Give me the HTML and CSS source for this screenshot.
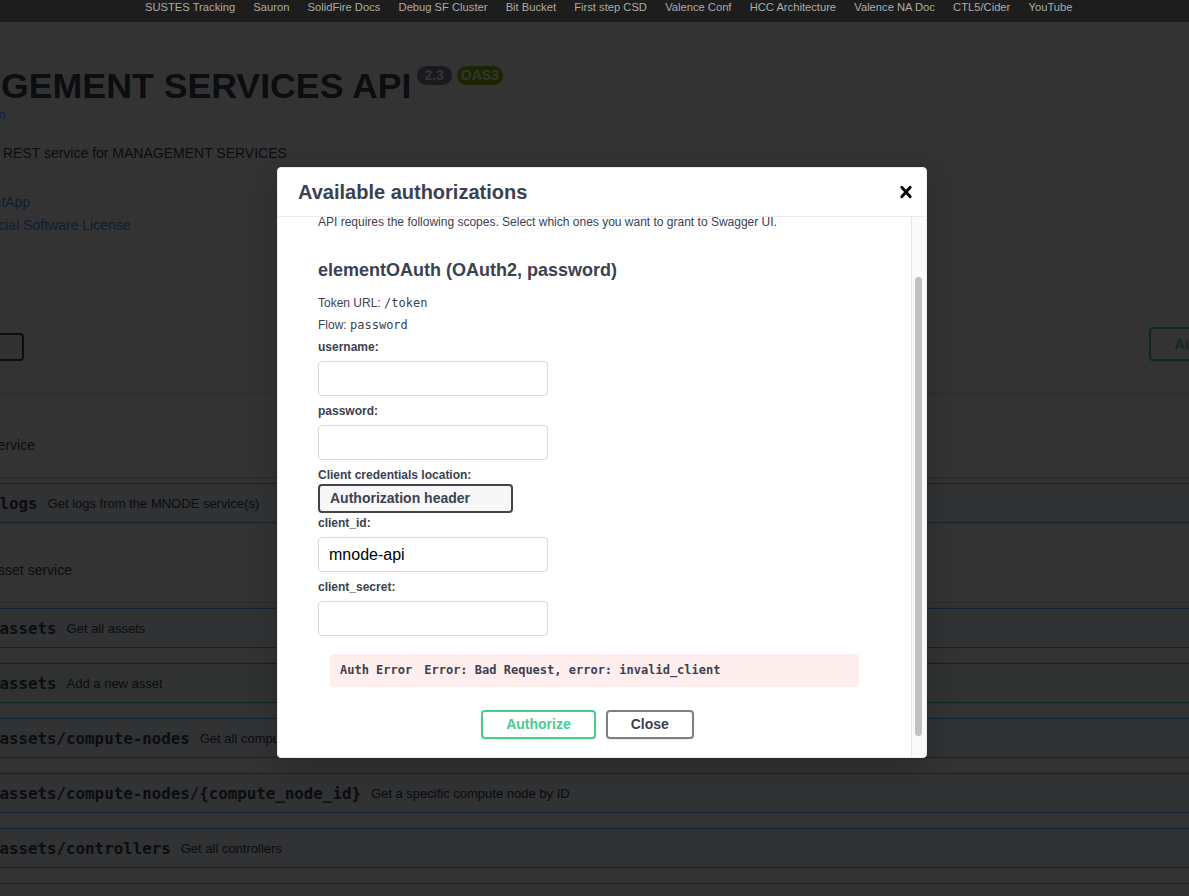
FILE: index.html
```html
<!DOCTYPE html>
<html lang="en">
<head>
<meta charset="utf-8">
<title>Management Services API</title>
<link rel="stylesheet" href="styles.css">
</head>
<body>
<nav class="bookmarks">
  <span>SUSTES Tracking</span>
  <span>Sauron</span>
  <span>SolidFire Docs</span>
  <span>Debug SF Cluster</span>
  <span>Bit Bucket</span>
  <span>First step CSD</span>
  <span>Valence Conf</span>
  <span>HCC Architecture</span>
  <span>Valence NA Doc</span>
  <span>CTL5/Cider</span>
  <span>YouTube</span>
</nav>
<div class="viewport">
  <div class="swagger">
    <div class="wrapper info">
      <hgroup class="main">
        <h2 class="title"><span>MANAGEMENT SERVICES API</span><small class="badge version"> 2.3 </small><small class="badge oas">OAS3</small></h2>
        <a class="url">/mnode/openapi.json</a>
      </hgroup>
      <p class="description">This NetApp HCI REST service for MANAGEMENT SERVICES</p>
      <div class="contact"><a>Send email to NetApp</a></div>
      <div class="license"><a>NetApp Commercial Software License</a></div>
    </div>

    <div class="scheme-container">
      <div class="wrapper schemes">
        <div class="scheme-label">
          <span>Schemes</span>
          <div class="scheme-select">HTTPS</div>
        </div>
        <div class="auth-wrapper">
          <button class="btn-authorize"><span>Authorize</span><svg width="20" height="20" viewBox="0 0 20 20"><path fill="currentColor" d="M15.8 8H14V5.6C14 2.703 12.665 1 10 1 7.334 1 6 2.703 6 5.6V8H4c-.553 0-1 .646-1 1.199V17c0 .549.428 1.139.951 1.307l1.197.387C5.672 18.861 6.550 19 7.1 19h5.8c.549 0 1.428-.139 1.951-.307l1.196-.387c.524-.167.953-.757.953-1.306V9.199C17 8.646 16.352 8 15.8 8zM12 8H8V5.199C8 3.754 8.797 3 10 3c1.203 0 2 .754 2 2.199V8z"/></svg></button>
        </div>
      </div>
    </div>

    <div class="wrapper ops">
      <section class="tag-section">
        <h4 class="tag"><span>logs</span><small>Log service</small></h4>
        <div class="opblock get"><div class="summary"><span class="method">GET</span><span class="path">/logs</span><span class="desc">Get logs from the MNODE service(s)</span></div></div>
      </section>
      <section class="tag-section">
        <h4 class="tag"><span>assets</span><small>Asset service</small></h4>
        <div class="opblock get"><div class="summary"><span class="method">GET</span><span class="path">/assets</span><span class="desc">Get all assets</span></div></div>
        <div class="opblock post"><div class="summary"><span class="method">POST</span><span class="path">/assets</span><span class="desc">Add a new asset</span></div></div>
        <div class="opblock get"><div class="summary"><span class="method">GET</span><span class="path">/assets/compute-nodes</span><span class="desc">Get all compute nodes</span></div></div>
        <div class="opblock get"><div class="summary"><span class="method">GET</span><span class="path">/assets/compute-nodes/{compute_node_id}</span><span class="desc">Get a specific compute node by ID</span></div></div>
        <div class="opblock get"><div class="summary"><span class="method">GET</span><span class="path">/assets/controllers</span><span class="desc">Get all controllers</span></div></div>
        <div class="opblock get"><div class="summary"><span class="method">GET</span><span class="path">/assets/controllers/{controller_id}</span><span class="desc">Get a specific controller by ID</span></div></div>
      </section>
    </div>
  </div>

  <div class="backdrop"></div>

  <div class="modal">
    <div class="modal-header">
      <h3>Available authorizations</h3>
      <button class="close" aria-label="Close"><svg width="24" height="24" viewBox="0 0 20 20"><path fill="#000" d="M14.348 14.849a1.2 1.2 0 0 1-1.697 0L10 11.819l-2.651 3.029a1.2 1.2 0 1 1-1.697-1.697l2.758-3.15-2.759-3.152a1.2 1.2 0 1 1 1.697-1.697L10 8.183l2.651-3.031a1.2 1.2 0 1 1 1.697 1.697l-2.758 3.152 2.758 3.15a1.2 1.2 0 0 1 0 1.698z"/></svg></button>
    </div>
    <div class="modal-body">
      <div class="modal-content">
        <div class="scope-def">
          <p>Scopes are used to grant an application different levels of access to data on behalf of the end user. Each API may declare one or more scopes.</p>
          <p>API requires the following scopes. Select which ones you want to grant to Swagger UI.</p>
        </div>
        <form class="auth-container">
          <h4>elementOAuth (OAuth2, password)</h4>
          <p class="flow">Token URL: <code>/token</code></p>
          <p class="flow">Flow: <code>password</code></p>
          <label>username:</label>
          <input class="field" type="text">
          <label>password:</label>
          <input class="field" type="password">
          <label>Client credentials location:</label>
          <div class="select">Authorization header</div>
          <label>client_id:</label>
          <input class="field" type="text" value="mnode-api">
          <label>client_secret:</label>
          <input class="field" type="password">
          <div class="errors"><b>Auth Error</b><span>Error: Bad Request, error: invalid_client</span></div>
          <div class="btn-wrapper">
            <button type="button" class="btn btn-auth">Authorize</button>
            <button type="button" class="btn btn-close">Close</button>
          </div>
        </form>
      </div>
      <div class="scrollbar"><div class="thumb"></div></div>
    </div>
  </div>
</div>
<script src="script.js"></script>
</body>
</html>
```

FILE: styles.css
```css
* { box-sizing: border-box; }
html, body { margin: 0; padding: 0; }
body {
  width: 1189px;
  height: 896px;
  overflow: hidden;
  background: #1d1d1d;
  font-family: "Liberation Sans", Arial, sans-serif;
  color: #3b4151;
}

/* bookmarks bar */
.bookmarks {
  height: 22px;
  background: #1d1d1d;
  display: flex;
  gap: 18.2px;
  padding: 1px 0 0 145px;
  font-size: 11.2px;
  line-height: 13px;
  color: #ababab;
  white-space: nowrap;
}

/* page */
.viewport {
  position: relative;
  height: 874px;
  overflow: hidden;
  background: #fff;
}
.swagger {
  width: 1450px;
  margin-left: -126px;
}
.wrapper { padding: 0 20px; }

.info { padding: 44px 20px 49px; }
.main { margin: 0; }
.title {
  display: flex;
  align-items: flex-start;
  margin: 0;
  font-size: 35.7px;
  font-weight: 700;
  line-height: 40px;
  white-space: nowrap;
  color: #3b4151;
}
.badge {
  margin-left: 5px;
  padding: 2px 4px;
  border-radius: 57px;
  font-size: 14px;
  line-height: 15px;
  font-weight: 700;
  color: #fff;
  white-space: pre;
}
.badge.version { background: #7d8492; }
.badge.oas { background: #89bf04; }
.url {
  display: block;
  margin-top: 2px;
  font-size: 12px;
  line-height: 15px;
  color: #4990e2;
}
.description {
  margin: 21px 0 0;
  font-size: 14px;
  line-height: 18px;
  white-space: nowrap;
}
.contact, .license {
  font-size: 14px;
  line-height: 18px;
  white-space: nowrap;
}
.contact { margin-top: 31px; }
.license { margin-top: 5px; }
.contact a, .license a { color: #4990e2; }

/* schemes */
.scheme-container {
  background: #fff;
  box-shadow: 0 1px 2px 0 rgba(0,0,0,.15);
  padding: 30px 0;
  margin-bottom: 20px;
}
.schemes {
  display: flex;
  align-items: flex-end;
}
.scheme-label span {
  display: block;
  font-size: 12px;
  font-weight: 700;
  line-height: 15px;
  margin-bottom: 5px;
}
.scheme-select {
  width: 130px;
  height: 28px;
  margin-bottom: 2px;
  padding: 4px 10px;
  border: 2px solid #41444e;
  border-radius: 4px;
  background: #f7f7f7;
  font-size: 14px;
  font-weight: 700;
  line-height: 16px;
}
.auth-wrapper {
  flex: 1;
  display: flex;
  justify-content: flex-end;
}
.btn-authorize {
  display: flex;
  align-items: center;
  height: 34px;
  margin-bottom: 2px;
  padding: 5px 23px;
  border: 2px solid #49cc90;
  border-radius: 4px;
  background: transparent;
  color: #49cc90;
  font-family: "Liberation Sans", Arial, sans-serif;
  font-size: 14px;
  font-weight: 700;
  box-shadow: 0 1px 2px rgba(0,0,0,.1);
}
.btn-authorize span { padding-right: 20px; }

/* operations */
.tag {
  display: flex;
  align-items: center;
  height: 65px;
  margin: 0 0 5px;
  padding: 10px 20px 10px 10px;
  border-bottom: 1px solid rgba(59,65,81,.3);
  font-size: 24px;
  font-weight: 700;
  color: #3b4151;
  white-space: nowrap;
}
.tag small {
  flex: 1;
  padding: 0 10px;
  font-size: 14px;
  font-weight: 400;
}
.opblock {
  margin: 0 0 15px;
  border: 1px solid;
  border-radius: 4px;
  box-shadow: 0 0 3px rgba(0,0,0,.19);
}
.opblock.get { border-color: #61affe; background: rgba(97,175,254,.1); }
.opblock.post { border-color: #49cc90; background: rgba(73,204,144,.1); }
.summary {
  display: flex;
  align-items: center;
  padding: 5px;
  white-space: nowrap;
}
.method {
  min-width: 80px;
  padding: 6px 15px;
  border-radius: 3px;
  font-size: 14px;
  font-weight: 700;
  line-height: 16px;
  text-align: center;
  color: #fff;
  text-shadow: 0 1px 0 rgba(0,0,0,.1);
}
.get .method { background: #61affe; }
.post .method { background: #49cc90; }
.path {
  padding: 0 10px;
  font-family: "DejaVu Sans Mono", monospace;
  font-size: 15.8px;
  font-weight: 700;
  color: #3b4151;
}
.desc {
  font-size: 13px;
  color: #3b4151;
}

/* overlay */
.backdrop {
  position: absolute;
  inset: 0;
  background: rgba(0,0,0,.8);
}

/* modal */
.modal {
  position: absolute;
  left: 277px;
  top: 145px;
  width: 650px;
  background: #fff;
  border: 1px solid #ebebeb;
  border-radius: 4px;
  box-shadow: 0 10px 30px 0 rgba(0,0,0,.2);
  overflow: hidden;
}
.modal-header {
  display: flex;
  align-items: center;
  justify-content: space-between;
  padding: 12px 8px 12px 20px;
  border-bottom: 1px solid #ebebeb;
}
.modal-header h3 {
  margin: 0;
  font-size: 20px;
  font-weight: 700;
  line-height: 24px;
  color: #3b4151;
}
.close {
  display: flex;
  padding: 0;
  border: 0;
  background: none;
}
.modal-body {
  display: flex;
  height: 540px;
}
.modal-content {
  flex: 1;
  min-width: 0;
  overflow: hidden;
  padding: 6px 20px 12px;
}
.scrollbar {
  width: 15px;
  flex: none;
  padding: 60px 4px 0 3px;
  background: #fafafa;
  border-left: 1px solid #e6e6e6;
}
.thumb {
  height: 459px;
  border-radius: 4px;
  background: #c1c1c1;
}
.scope-def { padding: 0 20px; }
.scope-def p {
  margin: 12px 0;
  font-size: 12px;
  line-height: 18px;
}
.auth-container {
  margin: 0 0 10px;
  padding: 10px 20px;
  border-bottom: 1px solid #ebebeb;
}
.auth-container h4 {
  margin: 5px 0 14px;
  font-size: 18px;
  font-weight: 700;
  line-height: 24px;
  color: #3b4151;
}
.flow {
  margin: 7px 0;
  font-size: 12px;
  line-height: 15px;
}
.flow code {
  font-family: "DejaVu Sans Mono", monospace;
  font-size: 12px;
}
.auth-container label {
  display: block;
  font-size: 12px;
  font-weight: 700;
  line-height: 15px;
}
.field {
  display: block;
  width: 230px;
  height: 35px;
  margin: 6px 0 8px;
  padding: 8px 10px;
  border: 1px solid #d9d9d9;
  border-radius: 4px;
  background: #fff;
  font-family: "Liberation Sans", Arial, sans-serif;
  font-size: 16px;
  color: #000;
  outline: none;
}
.select {
  width: 195px;
  height: 29px;
  margin: 1px 0 3px;
  padding: 5px 40px 5px 10px;
  border: 2px solid #41444e;
  border-radius: 4px;
  background: #f7f7f7;
  font-size: 14px;
  font-weight: 700;
  line-height: 15px;
  color: #3b4151;
  white-space: nowrap;
}
.errors {
  margin: 18px 12px 13px;
  padding: 10px;
  border-radius: 4px;
  background: #fee;
  font-family: "DejaVu Sans Mono", monospace;
  font-size: 12px;
  line-height: 13px;
  font-weight: 700;
  color: #3b4151;
  white-space: nowrap;
}
.errors b { margin-right: 12px; }
.btn-wrapper {
  display: flex;
  justify-content: center;
  padding: 10px 25px;
}
.btn {
  height: 29px;
  padding: 5px 23px;
  border: 2px solid #808080;
  border-radius: 4px;
  background: transparent;
  box-shadow: 0 1px 2px rgba(0,0,0,.1);
  font-family: "Liberation Sans", Arial, sans-serif;
  font-size: 14px;
  font-weight: 700;
  line-height: 15px;
  color: #3b4151;
}
.btn-auth {
  margin-right: 10px;
  border-color: #49cc90;
  color: #49cc90;
}
.btn-close { margin-right: 14px; }
```

FILE: script.js
```js
document.querySelector('.modal-content').scrollTop = 70;
```
